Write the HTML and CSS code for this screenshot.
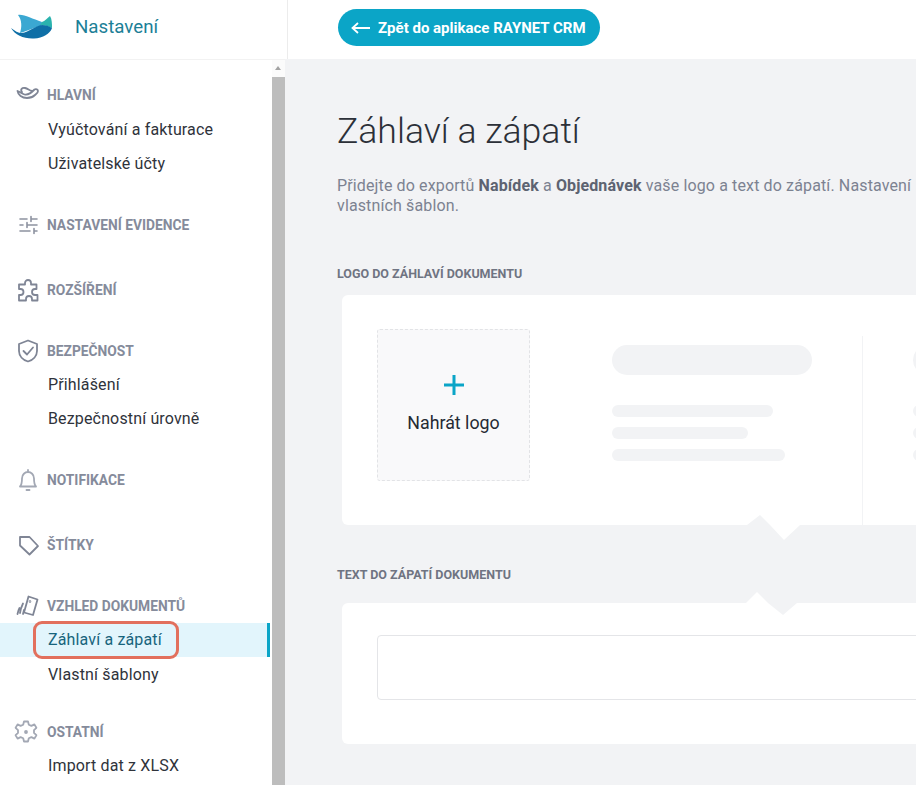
FILE: index.html
```html
<!DOCTYPE html>
<html lang="cs">
<head>
<meta charset="utf-8">
<title>Záhlaví a zápatí</title>
<link rel="stylesheet" href="styles.css">
</head>
<body>
<div class="app">
  <header class="top">
    <div class="brand">
      <svg class="logo" viewBox="0 0 42 25" width="42" height="25">
        <path fill="#3ba8d2" d="M8 1C14 0 22 5 32 8L31 12C25 13 17 17 10 19 12 13 12 6 8 1z"/>
        <path fill="#2bb3ae" d="M32 8C35 7 37 4 40 2 42 5 42 10 42 14 38 12 34 11 30 11z"/>
        <path fill="#0f6fa6" d="M1 14C5 17 8 19 12 19 19 18 25 12 32 11 36 11 39 12 42 14 40 20 33 24 24 24.500 14 25 5 21 1 14z"/>
      </svg>
      <span class="brand-name">Nastavení</span>
    </div>
    <div class="topbar">
      <a class="back" href="#">
        <svg viewBox="0 0 20 12" width="20" height="12" fill="none" stroke="#fff" stroke-width="1.800"><path d="M19 6H2M7 1 1.500 6 7 11"/></svg>
        <span>Zpět do aplikace RAYNET CRM</span>
      </a>
    </div>
  </header>
  <div class="body">
    <nav class="side">
      <section class="group group-first">
        <h3 class="head">
          <svg class="ico" viewBox="0 0 24 24"><path d="M1.500 8c2 .5 4 2.500 7 3.500 4 1 7-2 10-5 1.500-1 3.500 0 3.500 1.500 0 2-2 3-3 4-2 2-5 3-8 3-5 0-9-3-9.500-7zM6 9C4 6.500 6 4.500 9 5c3 .5 4 2.500 7 3"/></svg>
          <span>HLAVNÍ</span>
        </h3>
        <a class="item" href="#">Vyúčtování a fakturace</a>
        <a class="item" href="#">Uživatelské účty</a>
      </section>
      <section class="group group-wide">
        <h3 class="head">
          <svg class="ico ico-thin" viewBox="0 0 24 24"><path d="M4 6h7M15 6h6M15 3.500V8.500M4 12h3M11 12h10M11 9.500v5M4 18h10M18 18h3M18 15.500v5"/></svg>
          <span>NASTAVENÍ EVIDENCE</span>
        </h3>
      </section>
      <section class="group group-tight">
        <h3 class="head">
          <svg class="ico" viewBox="0 0 24 24"><path d="M9 6.500V5a3 3 0 0 1 6 0v1.500h5.500V11H19a2.800 2.800 0 0 0 0 6h2.500v5.500H16V21a3 3 0 0 0-6 0v1.500H3V17h1.500a3 3 0 0 0 0-6H3V6.500z"/></svg>
          <span>ROZŠÍŘENÍ</span>
        </h3>
      </section>
      <section class="group group-tight">
        <h3 class="head">
          <svg class="ico" viewBox="0 0 24 24"><path d="M12 1.500 21 5v7c0 5-4 9-9 10.500C7 21 3 17 3 12V5z"/><path d="m7.500 12 3.500 3.500 6-7"/></svg>
          <span>BEZPEČNOST</span>
        </h3>
        <a class="item" href="#">Přihlášení</a>
        <a class="item" href="#">Bezpečnostní úrovně</a>
      </section>
      <section class="group group-wide">
        <h3 class="head">
          <svg class="ico ico-light" viewBox="0 0 24 24"><path d="M4 18.500c2-2 2-4 2-8 0-4 3-6.500 6-6.500s6 2.500 6 6.500c0 4 0 6 2 8zM12 2v2M10.500 22h3"/></svg>
          <span>NOTIFIKACE</span>
        </h3>
      </section>
      <section class="group group-tight">
        <h3 class="head">
          <svg class="ico" viewBox="0 0 24 24"><path d="M4 4h9.500L22 13l-8.500 8.500L4 12.500z"/></svg>
          <span>ŠTÍTKY</span>
        </h3>
      </section>
      <section class="group group-last">
        <h3 class="head">
          <svg class="ico" viewBox="0 0 24 24"><path d="M12.500 2.500 21.500 5.500 17 21l-9-2.500z"/><circle cx="14" cy="7.500" r=".4"/><path d="M7 9.500c-1.500 3-2.500 6-3 9.500M3.500 14c-1 2-1.500 3.500-2 6M8 16l-1 4"/></svg>
          <span>VZHLED DOKUMENTŮ</span>
        </h3>
        <a class="item item-active" href="#">Záhlaví a zápatí<span class="mark"></span></a>
        <a class="item item-after" href="#">Vlastní šablony</a>
      </section>
      <section class="group">
        <h3 class="head">
          <svg class="ico ico-light ico-gear" viewBox="0 0 24 24"><path d="M10 1.500h4l.8 3.200 2.600 1.200 3-1.500 2 3.400-2.400 2.300v2.800l2.400 2.300-2 3.400-3-1.500-2.600 1.200-.8 3.200h-4l-.8-3.200-2.600-1.200-3 1.500-2-3.400 2.400-2.300V10.100L1.600 7.800l2-3.400 3 1.500 2.600-1.200z"/><circle cx="12" cy="12" r="1"/></svg>
          <span>OSTATNÍ</span>
        </h3>
        <a class="item" href="#">Import dat z XLSX</a>
      </section>
    </nav>
    <div class="scrollbar"><div class="scroll-btn"></div><div class="scroll-thumb"></div></div>
    <main class="main">
      <h1 class="title">Záhlaví a zápatí</h1>
      <p class="lead">Přidejte do exportů <b>Nabídek</b> a <b>Objednávek</b> vaše logo a text do zápatí. Nastavení<br>vlastních šablon.</p>
      <h2 class="label">LOGO DO ZÁHLAVÍ DOKUMENTU</h2>
      <div class="card card-logo">
        <div class="upload">
          <svg viewBox="0 0 20 20" width="20" height="20"><path d="M10 0v20M0 10h20" stroke="#0ba5c7" stroke-width="3"/></svg>
          <span>Nahrát logo</span>
        </div>
        <div class="ph">
          <div class="ph-big"></div>
          <div class="ph-line ph-a"></div>
          <div class="ph-line ph-b"></div>
          <div class="ph-line ph-c"></div>
        </div>
        <div class="ph ph-next">
          <div class="ph-big"></div>
          <div class="ph-line ph-a"></div>
          <div class="ph-line ph-b"></div>
          <div class="ph-line ph-c"></div>
        </div>
        <svg class="notch notch-bottom" viewBox="0 0 53 25" width="53" height="25"><path fill="#f2f3f5" d="M0 10 13 0 23 10z"/><path fill="#fff" d="M23 10 37 25 53 10z"/></svg>
      </div>
      <h2 class="label label-second">TEXT DO ZÁPATÍ DOKUMENTU</h2>
      <div class="card card-text">
        <svg class="notch notch-top" viewBox="0 0 51 23" width="51" height="23"><path fill="#fff" d="M0 11 11 0 22 11z"/><path fill="#f2f3f5" d="M22 11 37 23 51 11z"/></svg>
        <div class="textbox"></div>
      </div>
    </main>
  </div>
</div>
</body>
</html>
```
FILE: styles.css
```css
* { box-sizing: border-box; }
html, body { margin: 0; height: 100%; overflow: hidden; }
body { font-family: Roboto, "Noto Sans", sans-serif; background: #fff; color: #2c3038; }
a { text-decoration: none; color: inherit; }

.app { width: 916px; height: 785px; display: flex; flex-direction: column; overflow: hidden; }

.top { height: 60px; flex: none; display: flex; }
.brand { width: 288px; flex: none; display: flex; align-items: center; padding: 0 0 6px 10px; gap: 23px; border-right: 1px solid #ececec; border-bottom: 1px solid #f2f2f2; }
.logo { flex: none; }
.brand-name { font-size: 18.700px; color: #1c7f97; }
.topbar { flex: 1; padding: 9px 0 0 50px; }
.back { display: inline-flex; align-items: center; gap: 7px; height: 37px; padding: 0 14px 0 13px; border-radius: 19px; background: #0ba5c7; color: #fff; font-size: 15px; font-weight: 700; }

.body { flex: 1; display: flex; min-height: 0; }

.side { width: 272px; flex: none; padding-top: 18px; overflow: hidden; }
.group { margin-bottom: 28px; }
.group-first { margin-bottom: 27px; }
.group-first .head { height: 35px; padding-bottom: 1px; }
.group-wide { margin-bottom: 31px; }
.group-tight { margin-bottom: 27px; }
.group-last { margin-bottom: 23px; }
.head { display: flex; align-items: center; gap: 7px; height: 34px; margin: 0; padding-left: 16px; font-size: 13.800px; font-weight: 700; color: #858b9b; }
.ico { width: 24px; height: 24px; flex: none; fill: none; stroke: #7f8595; stroke-width: 1.800; stroke-linejoin: round; stroke-linecap: round; }
.ico-thin { stroke: #8d92a0; stroke-width: 1.600; }
.ico-light { stroke: #a3a8b4; }
.ico-gear { margin: 0 2px 0 -2px; }
.item { display: block; position: relative; height: 34px; line-height: 34px; padding-left: 48px; font-size: 16px; color: #2f333b; letter-spacing: .15px; }
.item-active { width: 270px; background: #e2f5fc; border-right: 3px solid #0ba5c7; color: #17647c; }
.item-after { margin-top: 1px; }
.mark { position: absolute; left: 33px; top: -2px; width: 146px; height: 38px; border: 3px solid #e2705d; border-radius: 9px; }

.scrollbar { width: 13px; flex: none; display: flex; flex-direction: column; }
.scroll-btn { height: 17px; background: #fbfbfb; position: relative; }
.scroll-btn::after { content: ""; position: absolute; left: 3px; top: 6px; border: 3.500px solid transparent; border-top: 0; border-bottom: 4px solid #a3a3a3; }
.scroll-thumb { flex: 1; background: #bdbdbd; }

.main { flex: 1; min-width: 0; margin-top: -1px; background: #f2f3f5; padding: 51px 0 0 52px; overflow: hidden; }
.title { margin: 0; font-size: 35.600px; line-height: 42px; font-weight: 300; color: #2c3038; white-space: nowrap; }
.lead { margin: 24px 0 0; font-size: 16px; line-height: 20px; letter-spacing: .13px; color: #7c8291; white-space: nowrap; }
.lead b { color: #5d6371; font-weight: 700; }
.label { margin: 50px 0 0; font-size: 12.500px; line-height: 16px; font-weight: 700; color: #6f7482; white-space: nowrap; }
.label-second { margin-top: 42px; }

.card { position: relative; width: 760px; margin: 13px 0 0 5px; background: #fff; border-radius: 6px 0 0 6px; }
.card-logo { height: 230px; display: flex; padding: 34px 0 0 35px; }
.card-text { height: 141px; margin-top: 20px; padding: 32px 0 0 35px; }

.upload { width: 153px; height: 152px; flex: none; display: flex; flex-direction: column; align-items: center; padding-top: 45px; gap: 17px; background: #f9f9fa; border: 1px dashed #e2e3e6; border-radius: 3px; font-size: 17.800px; color: #252a33; }

.ph { width: 250px; height: 189px; flex: none; margin: 7px 0 0 82px; padding-top: 9px; }
.ph-next { margin-left: 0; padding-left: 50px; width: 300px; border-left: 1px solid #f2f3f5; }
.ph-big { width: 200px; height: 30px; border-radius: 15px; background: #f2f3f5; margin-bottom: 30px; }
.ph-line { height: 12px; border-radius: 6px; background: #f2f3f5; margin-bottom: 10px; }
.ph-a { width: 161px; }
.ph-b { width: 136px; }
.ph-c { width: 173px; }

.notch { position: absolute; }
.notch-bottom { left: 405px; bottom: -15px; }
.notch-top { left: 404px; top: -11px; }

.textbox { width: 700px; height: 65px; background: #fff; border: 1px solid #e4e5e8; border-radius: 4px; }
```
